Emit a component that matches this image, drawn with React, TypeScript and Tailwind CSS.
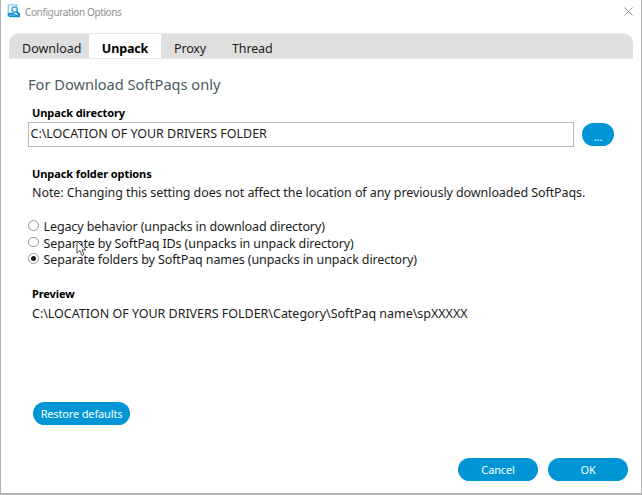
import type { ReactNode } from "react";

function AppIcon() {
  return (
    <svg width="14" height="14" viewBox="0 0 14 14" className="shrink-0">
      <path d="M1.2 8.6V0.9H10V2.6" fill="none" stroke="#56b3dc" strokeWidth="0.9" />
      <path d="M0.6 8.8H6.5L8.6 10.4L13 11.2V13.3H2.6L0.6 11.6Z" fill="#0f93d0" />
      <path d="M2 11.2H8" stroke="#9bd6ef" strokeWidth="0.7" />
      <circle cx="7.6" cy="5.6" r="2.7" fill="#e3f3fa" stroke="#2b9fd5" strokeWidth="1.3" />
      <path d="M9.5 7.6L12.8 11" stroke="#0f86c2" strokeWidth="2" />
    </svg>
  );
}

function Pointer() {
  return (
    <svg width="11" height="17" viewBox="0 0 11 17" className="absolute left-[75px] top-[240px]">
      <path d="M1 1V13.2L3.9 10.6L6 15.4L8 14.5L6 9.9H9.8Z" fill="#fff" stroke="#454a55" strokeWidth="1" />
    </svg>
  );
}

function Radio({ checked, children }: { checked?: boolean; children: string }) {
  return (
    <label className="flex h-[16.5px] items-start">
      <span className="mr-[5px] mt-[2px] flex size-[10.5px] shrink-0 items-center justify-center rounded-full border border-[#959595] bg-white">
        {checked && <span className="size-[5.5px] rounded-full bg-[#1c1c1c]" />}
      </span>
      <span className="text-[12.5px] leading-[17px] tracking-[-0.11px]">{children}</span>
    </label>
  );
}

function Pill({ className, children }: { className: string; children: ReactNode }) {
  return (
    <button className={`flex h-[23px] items-center justify-center rounded-full bg-[#0096d6] pt-[2px] text-[11px] tracking-[-0.15px] text-white ${className}`}>
      {children}
    </button>
  );
}

export default function App() {
  return (
    <div className="relative flex h-[495px] w-[642px] flex-col overflow-hidden whitespace-nowrap border-r border-b-2 border-l border-[#b4b4b4] bg-white font-['Noto_Sans',sans-serif] text-[#1c1c1c]">
      <header className="flex h-[33px] items-start pl-[6px] pt-1">
        <AppIcon />
        <span className="ml-[4px] text-[10px] leading-4 tracking-[-0.39px] text-[#929292]">Configuration Options</span>
        <svg width="9" height="9" viewBox="0 0 9 9" className="ml-auto mr-[8px] mt-[3px]">
          <path d="M0.5 0.5L8.5 8.5M8.5 0.5L0.5 8.5" stroke="#8c8c8c" strokeWidth="0.9" />
        </svg>
      </header>
      <nav className="ml-2 flex h-[26px] w-[624px] rounded-t-[10px] border-y border-[#e9e9e9] bg-[#dfdfdf] text-[12.5px] leading-[29px]">
        <span className="w-20 pl-[13px]">Download</span>
        <span className="w-[72px] bg-white text-center font-bold tracking-[-0.15px] text-black">Unpack</span>
        <span className="w-[58px] pl-[13px] tracking-[-0.15px]">Proxy</span>
        <span className="pl-[13px] tracking-[-0.15px]">Thread</span>
      </nav>
      <main className="flex flex-col pl-[31px]">
        <h1 className="-ml-1 mt-[13px] text-[14.6px] leading-6 text-[#4a5b62]">For Download SoftPaqs only</h1>
        <h2 className="mt-[9px] text-[11px] font-bold leading-4 tracking-[-0.09px] text-black">Unpack directory</h2>
        <div className="-ml-1 mt-px flex items-center">
          <div className="h-[25px] w-[546px] border border-[#b9b9bd] pl-[1.5px] text-[12.5px] leading-[21px] tracking-[-0.02px]">C:\LOCATION OF YOUR DRIVERS FOLDER</div>
          <Pill className="ml-[8px] w-[32px] pt-[5px]">...</Pill>
        </div>
        <h2 className="mt-[19px] text-[11px] font-bold leading-4 tracking-[-0.09px] text-black">Unpack folder options</h2>
        <p className="mt-[3px] text-[12.5px] leading-4 tracking-[-0.08px]">Note: Changing this setting does not affect the location of any previously downloaded SoftPaqs.</p>
        <div className="-ml-1 mt-[17px] flex flex-col">
          <Radio>Legacy behavior (unpacks in download directory)</Radio>
          <Radio>Separate by SoftPaq IDs (unpacks in unpack directory)</Radio>
          <Radio checked>Separate folders by SoftPaq names (unpacks in unpack directory)</Radio>
        </div>
        <h2 className="mt-[18px] text-[11px] font-bold leading-4 tracking-[-0.09px] text-black">Preview</h2>
        <p className="mt-[4px] text-[12.5px] leading-4 tracking-[-0.02px]">C:\LOCATION OF YOUR DRIVERS FOLDER\Category\SoftPaq name\spXXXXX</p>
        <Pill className="ml-px mt-[80px] w-[97px]">Restore defaults</Pill>
      </main>
      <footer className="mb-[12px] mr-[13px] mt-auto flex justify-end gap-[10px]">
        <Pill className="w-20">Cancel</Pill>
        <Pill className="w-20">OK</Pill>
      </footer>
      <Pointer />
    </div>
  );
}
